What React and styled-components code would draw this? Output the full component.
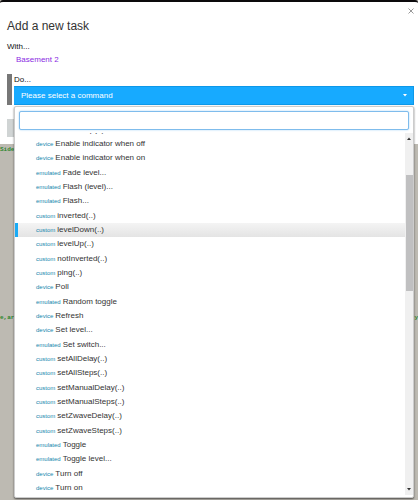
import React, { useEffect, useRef } from 'react';
import styled, { createGlobalStyle, css } from 'styled-components';

const commands = [
    ['custom', 'doubleTap(..)'],
    ['device', 'Enable indicator when off'],
    ['device', 'Enable indicator when on'],
    ['emulated', 'Fade level...'],
    ['emulated', 'Flash (level)...'],
    ['emulated', 'Flash...'],
    ['custom', 'inverted(..)'],
    ['custom', 'levelDown(..)'],
    ['custom', 'levelUp(..)'],
    ['custom', 'notInverted(..)'],
    ['custom', 'ping(..)'],
    ['device', 'Poll'],
    ['emulated', 'Random toggle'],
    ['device', 'Refresh'],
    ['device', 'Set level...'],
    ['emulated', 'Set switch...'],
    ['custom', 'setAllDelay(..)'],
    ['custom', 'setAllSteps(..)'],
    ['custom', 'setManualDelay(..)'],
    ['custom', 'setManualSteps(..)'],
    ['custom', 'setZwaveDelay(..)'],
    ['custom', 'setZwaveSteps(..)'],
    ['emulated', 'Toggle'],
    ['emulated', 'Toggle level...'],
    ['device', 'Turn off'],
    ['device', 'Turn on'],
];

const GlobalStyle = createGlobalStyle`
    * { box-sizing: border-box; }
    body {
        margin: 0;
        background: #bdbab2;
        font-family: "Liberation Sans", Arial, sans-serif;
        font-size: 8px;
        color: #333;
    }
    button, input { font: inherit; }
`;

const Page = styled.div`
    position: relative;
    min-height: 100vh;
    overflow: hidden;
`;

/** code lines of the page behind the dialog */
const CodeBackdrop = styled.div`
    display: flex;
    flex-direction: column;
    gap: 160px;
    padding-top: 2px;
    font-family: "Liberation Mono", monospace;
    font-size: 6px;
    font-weight: 700;
    line-height: 8px;
    color: #2c862c;
`;

const CodeLine = styled.div`
    display: flex;
    justify-content: space-between;
    white-space: nowrap;
`;

const Dialog = styled.section`
    background: #fff;
    border-top: 2px solid #0c0a0c;
    border-radius: 3px 3px 0 0;
`;

const DialogHeader = styled.header`
    display: flex;
    justify-content: space-between;
    align-items: flex-start;
    padding: 4px 2px 0 7px;
`;

const Title = styled.h1`
    margin: 0;
    padding-top: 12px;
    font-size: 12px;
    line-height: 16px;
    font-weight: 400;
`;

const CloseButton = styled.button`
    display: flex;
    padding: 2px;
    border: 0;
    background: none;
    color: #999;
`;

const DialogBody = styled.div`
    padding: 7px 4px 0 7px;
`;

const Label = styled.div`
    line-height: 12px;
    color: #111;
`;

const DeviceLink = styled.a`
    display: block;
    padding-left: 9px;
    line-height: 14px;
    color: #8a2be2;
    text-decoration: none;
`;

const Step = styled.div`
    margin-top: 7px;
    padding-left: 2px;
    border-left: 5px solid #777;
`;

const Picker = styled.div`
    position: relative;
`;

const PickerButton = styled.button`
    display: flex;
    align-items: center;
    justify-content: space-between;
    width: 100%;
    height: 19px;
    padding: 0 6px;
    border: 1px solid #0d98e8;
    border-left-color: #17aaff;
    background: #17aaff;
    color: #fff;
`;

const Menu = styled.div`
    position: absolute;
    top: 100%;
    left: 0;
    right: 0;
    margin-top: 1px;
    padding: 4px 0 2px;
    background: #fff;
    border: 1px solid #ccc;
    border-radius: 2px;
    box-shadow: 0 1px 2px rgba(0, 0, 0, 0.6);
`;

const SearchBox = styled.input`
    display: block;
    width: calc(100% - 8px);
    height: 19px;
    margin: 0 4px;
    padding: 0 4px;
    border: 1px solid #7fbcec;
    border-radius: 2px;
    outline: 0;
    box-shadow: 0 0 2px #9fd2f5;
`;

const ListArea = styled.div`
    display: flex;
    height: 362px;
    margin-top: 3px;
`;

const List = styled.ul`
    flex: 1;
    margin: 0;
    padding: 0;
    overflow: hidden;
    list-style: none;
`;

const Row = styled.li`
    height: 14px;
    padding-left: 21px;
    line-height: 14px;
    white-space: nowrap;
    &:nth-child(3n) { margin-bottom: 1px; }
    ${(props) => props.$active && css`
        padding-left: 18px;
        border-left: 3px solid #1aabf5;
        background: linear-gradient(#f4f4f4, #e4e4e4);
    `}
`;

const Kind = styled.small`
    margin-right: 2px;
    font-size: 6px;
    color: #1587ad;
`;

const ScrollTrack = styled.div`
    display: flex;
    flex-direction: column;
    align-items: center;
    width: 8px;
    padding: 4px 0;
    background: #f0f0f0;
`;

const ScrollThumb = styled.div`
    width: 7px;
    height: 116px;
    margin: 35px 0 auto;
    background: #c0c0c1;
`;

const DialogFooter = styled.footer`
    display: flex;
    justify-content: space-between;
    padding: 14px 4px 7px 7px;
`;

const FooterButton = styled.button`
    width: 48px;
    height: 18px;
    border: 0;
    background: ${(props) => (props.$primary ? '#5bb5d8' : '#d0d4d4')};
`;

function Arrow({ up }) {
    return (
        <svg width="4" height="3" viewBox="0 0 4 3" fill="currentColor" aria-hidden="true">
            <path d={up ? 'M0 3 2 .5 4 3Z' : 'M0 0H4L2 2.5Z'} />
        </svg>
    );
}

export default function App() {
    const listRef = useRef(null);

    // keep the list part way down its first row
    useEffect(() => {
        listRef.current.scrollTop = 10;
    }, []);

    return (
        <Page>
            <GlobalStyle />
            <Dialog role="dialog" aria-labelledby="task-title">
                <DialogHeader>
                    <Title id="task-title">Add a new task</Title>
                    <CloseButton type="button" aria-label="Close">
                        <svg width="6" height="6" viewBox="0 0 6 6" stroke="currentColor" aria-hidden="true">
                            <path d="M.5 .5 5.5 5.5M5.5 .5 .5 5.5" />
                        </svg>
                    </CloseButton>
                </DialogHeader>
                <DialogBody>
                    <Label>With...</Label>
                    <DeviceLink href="#device">Basement 2</DeviceLink>
                    <Step>
                        <Label id="do-label">Do...</Label>
                        <Picker>
                            <PickerButton type="button" aria-expanded="true">
                                Please select a command
                                <Arrow />
                            </PickerButton>
                            <Menu>
                                <SearchBox type="text" aria-label="Search commands" />
                                <ListArea>
                                    <List ref={listRef} aria-labelledby="do-label">
                                        {commands.map(([kind, name]) => (
                                            <Row key={name} $active={name === 'levelDown(..)'}>
                                                <Kind>{kind}</Kind>
                                                {name}
                                            </Row>
                                        ))}
                                    </List>
                                    <ScrollTrack>
                                        <Arrow up />
                                        <ScrollThumb />
                                        <Arrow />
                                    </ScrollTrack>
                                </ListArea>
                            </Menu>
                        </Picker>
                    </Step>
                </DialogBody>
                <DialogFooter>
                    <FooterButton type="button" aria-label="Cancel" />
                    <FooterButton type="button" aria-label="Save" $primary />
                </DialogFooter>
            </Dialog>
            <CodeBackdrop>
                <CodeLine><span>Side</span></CodeLine>
                <CodeLine><span>e,arr</span><span>y</span></CodeLine>
            </CodeBackdrop>
        </Page>
    );
}
